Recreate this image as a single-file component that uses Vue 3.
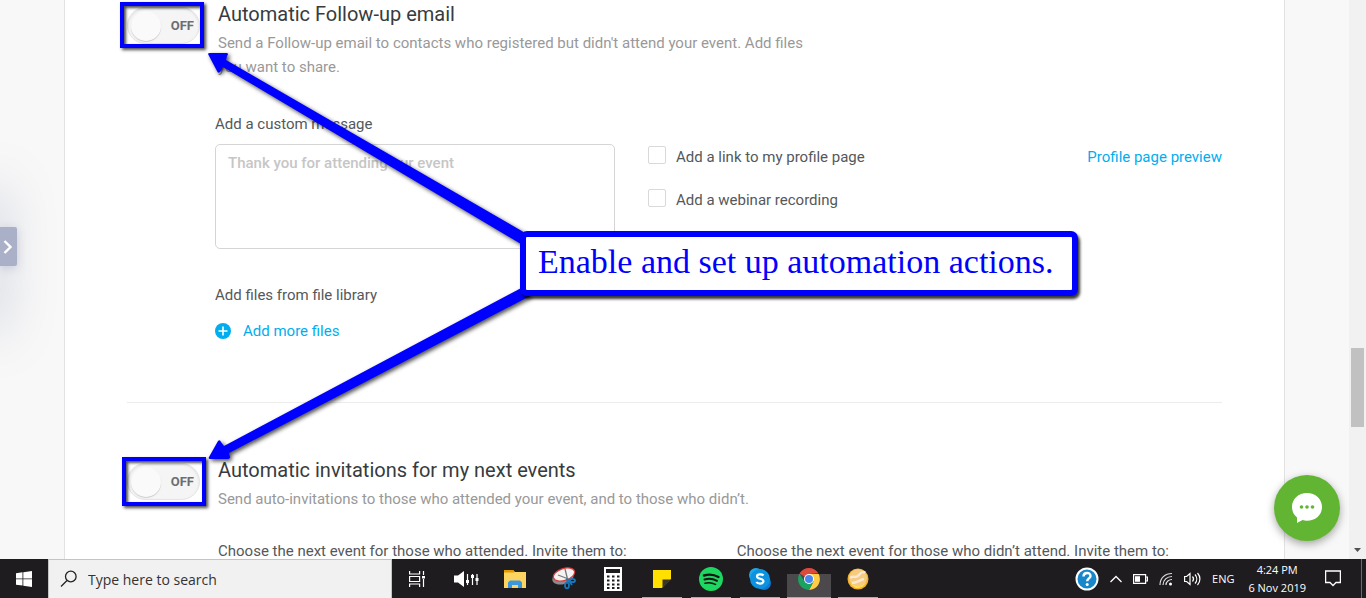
<template>
  <div class="desktop">
    <div class="browser">
      <main class="page">
        <div class="card">
          <section class="automation">
            <button
              type="button"
              class="toggle"
              role="switch"
              aria-label="Automatic Follow-up email"
              :aria-checked="followUp"
              @click="followUp = !followUp"
            >
              <span class="knob"></span>
              <span class="state">{{ followUp ? "ON" : "OFF" }}</span>
            </button>
            <div class="automation-body">
              <h2>Automatic Follow-up email</h2>
              <p class="description narrow">
                Send a Follow-up email to contacts who registered but didn't attend your event. Add files you want to share.
              </p>
            </div>
          </section>

          <div class="fields">
            <div class="message">
              <label for="message">Add a custom message</label>
              <textarea id="message" v-model="message" placeholder="Thank you for attending our event"></textarea>
            </div>
            <div class="options">
              <label v-for="item in options" :key="item.id" class="option">
                <input type="checkbox" v-model="item.checked" />
                {{ item.label }}
              </label>
            </div>
            <a class="preview" href="#">Profile page preview</a>
          </div>

          <div class="files">
            <p>Add files from file library</p>
            <a class="add-files" href="#">
              <svg width="16" height="16" viewBox="0 0 16 16">
                <circle cx="8" cy="8" r="8" fill="#00aeef" />
                <path d="M8 3.5v9M3.5 8h9" stroke="#fff" stroke-width="1.6" />
              </svg>
              Add more files
            </a>
          </div>

          <hr />

          <section class="automation">
            <button
              type="button"
              class="toggle"
              role="switch"
              aria-label="Automatic invitations for my next events"
              :aria-checked="invitations"
              @click="invitations = !invitations"
            >
              <span class="knob"></span>
              <span class="state">{{ invitations ? "ON" : "OFF" }}</span>
            </button>
            <div class="automation-body">
              <h2>Automatic invitations for my next events</h2>
              <p class="description">
                Send auto-invitations to those who attended your event, and to those who didn’t.
              </p>
              <div class="choices">
                <p>Choose the next event for those who attended. Invite them to:</p>
                <p>Choose the next event for those who didn’t attend. Invite them to:</p>
              </div>
            </div>
          </section>
        </div>
      </main>

      <div class="scrollbar">
        <div class="thumb"></div>
        <svg class="scroll-down" width="7" height="4" viewBox="0 0 7 4">
          <path d="M0 0h7L3.5 4z" fill="#505050" />
        </svg>
      </div>

      <div class="drawer-shadow"></div>
      <button type="button" class="drawer" aria-label="Open menu">
        <svg width="10" height="16" viewBox="0 0 10 16">
          <path d="M1.5 2l6 6-6 6" fill="none" stroke="#fff" stroke-width="2.4" />
        </svg>
      </button>

      <button type="button" class="chat" aria-label="Chat">
        <svg width="30" height="30" viewBox="0 0 30 30">
          <path d="M15 0C6.500 0 0 6 0 14c0 4.500 2 8 5 10.500V30l5.500-3c1.500.6 3 .8 4.500.8 8.500 0 15-5.800 15-13.800S23.500 0 15 0z" fill="#fff" />
          <g fill="#62b532">
            <circle cx="9.500" cy="14" r="1.800" />
            <circle cx="15" cy="14" r="1.800" />
            <circle cx="20.500" cy="14" r="1.800" />
          </g>
        </svg>
      </button>

      <!-- annotations -->
      <div class="frame frame-first"></div>
      <div class="frame frame-second"></div>
      <svg class="arrows" width="560" height="480" viewBox="0 0 560 480">
        <path d="M208 54q0-1 2-1h17q2 1 0 3l-1 4 301 174-6 10L223 67l-3 5q-2 2-3-1z" />
        <path d="M209 457l9-16q2-2 3 1l3 4 301-160 5 10-301 157 1 4q0 2-3 2h-17q-2 0-1-2z" />
      </svg>
      <div class="callout">Enable and set up automation actions.</div>
    </div>

    <footer class="taskbar">
      <button type="button" class="start" aria-label="Start">
        <svg width="16" height="16" viewBox="0 0 16 16" fill="#fff">
          <path d="M0 2.200l6.500-.9v6.200H0zM7.300 1.200L16 0v7.500H7.300zM0 8.300h6.500v6.200L0 13.700zM7.300 8.300H16V16l-8.700-1.300z" />
        </svg>
      </button>
      <label class="search">
        <svg width="18" height="18" viewBox="0 0 18 18" fill="none" stroke="#222" stroke-width="1.300">
          <circle cx="10.800" cy="6.500" r="5.300" />
          <path d="M7 10.500L1 16.500" />
        </svg>
        <input type="text" placeholder="Type here to search" />
      </label>

      <nav class="apps">
        <button type="button" aria-label="Task view">
          <svg width="18" height="18" viewBox="0 0 18 18" fill="none" stroke="#fff" stroke-width="1.200">
            <path d="M1.600 1v3h10V1M1.600 17v-3h10v3M1.600 6.500h10v5h-10zM15.500 1v4M15.500 9v8" />
            <path d="M14 6h3v2.500h-3z" fill="#fff" stroke="none" />
          </svg>
        </button>
        <button type="button" aria-label="Sound mixer">
          <svg width="26" height="18" viewBox="0 0 26 18">
            <path d="M1 5.500h4L11 1v16l-6-4.500H1z" fill="#fff" />
            <path d="M14.500 4v11M19.500 4v11M24 4v11" stroke="#fff" stroke-width="1.200" />
            <path d="M13 10h3v3h-3zM18 5h3v3h-3zM22.500 8h3v3h-3z" fill="#fff" />
          </svg>
        </button>
        <button type="button" aria-label="File Explorer">
          <svg width="22" height="18" viewBox="0 0 22 18">
            <path d="M0 0h9l2 2h11v16H0z" fill="#fcd462" />
            <path d="M0 0h9l1.500 2.500H0z" fill="#e09b00" />
            <path d="M4 18v-5.500l2-2h10l2 2V18h-4v-3H8v3z" fill="#3a96dd" />
          </svg>
        </button>
        <button type="button" aria-label="Snipping Tool">
          <svg width="24" height="23" viewBox="0 0 24 23">
            <ellipse cx="11" cy="10.500" rx="11" ry="6.500" fill="#8b8b8f" transform="rotate(-18 11 10.500)" />
            <ellipse cx="12" cy="7.500" rx="11" ry="6" fill="#f3f3f3" stroke="#d93a3a" stroke-width="1.300" transform="rotate(-18 12 7.500)" />
            <path d="M13 2l3 12M6 8l13 5" stroke="#777" stroke-width="1.300" />
            <g fill="none" stroke="#1679bf" stroke-width="1.800">
              <ellipse cx="20.500" cy="13.500" rx="2.500" ry="1.700" />
              <ellipse cx="15" cy="18.500" rx="2" ry="2.800" />
              <path d="M14 12l4 2M16 12l-1 4M17 14l3 4" />
            </g>
          </svg>
        </button>
        <button type="button" aria-label="Calculator">
          <svg width="18" height="24" viewBox="0 0 18 24">
            <path d="M0 0h18v24H0z" fill="#fff" />
            <path d="M2 2h14v4H2z" fill="#1e1c1f" />
            <path d="M3 9.500h13M3 13.500h13M3 17.500h13M3 21h13" stroke="#1e1c1f" stroke-width="2" stroke-dasharray="2.500 2.500" />
          </svg>
        </button>
        <button type="button" class="running" aria-label="Sticky Notes">
          <svg width="18" height="18" viewBox="0 0 18 18">
            <path d="M0 0h18v9l-9 9H0z" fill="#ffe000" />
            <path d="M9.500 18V9.500H18z" fill="#3a3520" />
          </svg>
        </button>
        <button type="button" class="running" aria-label="Spotify">
          <svg width="24" height="24" viewBox="0 0 24 24">
            <circle cx="12" cy="12" r="12" fill="#1ed760" />
            <g fill="none" stroke="#191414" stroke-linecap="round">
              <path d="M5 8.500c5-1.500 10-1 14.500 1.500" stroke-width="2.400" />
              <path d="M5.500 12.500c4.500-1.300 8.500-.8 12.500 1.300" stroke-width="2" />
              <path d="M6 16.200c4-1 7.200-.5 10.500 1.200" stroke-width="1.600" />
            </g>
          </svg>
        </button>
        <button type="button" class="running" aria-label="Skype">
          <svg width="22" height="22" viewBox="0 0 22 22">
            <circle cx="7" cy="7" r="7" fill="#1fa9ea" />
            <circle cx="15" cy="15" r="7" fill="#0a78d4" />
            <circle cx="11" cy="11" r="10" fill="#0d92e0" />
            <path d="M14.500 7.500C13.500 6.200 8 5.600 8 8.500c0 3 6.500 1.600 6.500 4.800 0 3-5.800 2.800-7.200.7" fill="none" stroke="#fff" stroke-width="2.200" />
          </svg>
        </button>
        <button type="button" class="running active" aria-label="Chrome">
          <svg width="22" height="22" viewBox="0 0 22 22">
            <path d="M11 11L1.500 5.500A11 11 0 0 1 20.500 5.500L11 6z" fill="#dd4b3e" />
            <path d="M11 6h9.700A11 11 0 0 1 11 22l4.500-8.500z" fill="#ffcd46" />
            <path d="M1.500 5.500A11 11 0 0 0 11 22l4.500-8.500L11 11l-4.500 2.500z" fill="#1aa260" />
            <circle cx="11" cy="11" r="5" fill="#fff" />
            <circle cx="11" cy="11" r="4" fill="#4a87ee" />
          </svg>
        </button>
        <button type="button" class="running" aria-label="Tennis">
          <svg width="22" height="22" viewBox="0 0 22 22">
            <circle cx="11" cy="11" r="10.500" fill="#f0b030" />
            <circle cx="11" cy="10" r="9" fill="#f5cb80" />
            <path d="M3 10c4-3 6 1 9-3s5-3 6-2M5 15c5 0 7-3 12-4" fill="none" stroke="#fbe6cf" stroke-width="2.500" />
            <path d="M3 14c3 5 12 6 16 0-2 7-13 9-16 0z" fill="#ffdf4f" />
          </svg>
        </button>
      </nav>

      <div class="tray">
        <svg width="24" height="24" viewBox="0 0 24 24">
          <circle cx="12" cy="12" r="10.500" fill="#1687cb" stroke="#fff" stroke-width="2" />
          <path d="M8.500 9.500c0-4.600 7-4.600 7-.6 0 2.400-3.300 2.600-3.300 5.300" fill="none" stroke="#fff" stroke-width="2.400" />
          <circle cx="12.200" cy="17.500" r="1.500" fill="#fff" />
        </svg>
        <svg width="12" height="8" viewBox="0 0 12 8">
          <path d="M.5 7L6 1.500 11.500 7" fill="none" stroke="#fff" stroke-width="1.300" />
        </svg>
        <svg width="15" height="10" viewBox="0 0 15 10">
          <path d="M.6.600h12v8.800H.6zM12.600 3h1.800v4h-1.800" fill="none" stroke="#fff" stroke-width="1.200" />
          <path d="M2 2.200h5v5.600H2z" fill="#fff" />
        </svg>
        <svg width="14" height="14" viewBox="0 0 14 14" fill="none" stroke="#ddd" stroke-width="1.200">
          <path d="M1 13C1 6 6 1.500 13 1.500M4 13c0-5 4-8.500 9-8.500M7 13c0-3.500 3-5.500 6-5.500" />
          <circle cx="11.500" cy="12" r="1.500" fill="#fff" stroke="none" />
        </svg>
        <svg width="17" height="14" viewBox="0 0 17 14" fill="none" stroke="#fff" stroke-width="1.200">
          <path d="M.6 4.500h2L6 1.500v11L2.600 9.500h-2zM8.500 4.500c1.300 1.500 1.300 3.500 0 5M11 2.500c2.300 2.600 2.300 6.400 0 9M13.500 1c3.200 3.500 3.200 8.500 0 12" />
        </svg>
        <span class="lang">ENG</span>
        <div class="clock">
          <span>4:24 PM</span>
          <span>6 Nov 2019</span>
        </div>
        <svg width="16" height="17" viewBox="0 0 16 17">
          <path d="M.6 1h14.800v11.500H11l-3 3-3-3H.6z" fill="none" stroke="#fff" stroke-width="1.300" />
        </svg>
      </div>
    </footer>
  </div>
</template>

<script setup>
import { ref } from "vue";

const followUp = ref(false);
const invitations = ref(false);
const message = ref("");

const options = ref([
  { id: 1, label: "Add a link to my profile page", checked: false },
  { id: 2, label: "Add a webinar recording", checked: false },
]);
</script>

<style>
body {
  margin: 0;
}
</style>

<style scoped>
.desktop {
  display: flex;
  flex-direction: column;
  height: 100vh;
  overflow: hidden;
  font-family: Roboto, "Liberation Sans", sans-serif;
  font-size: 15px;
  line-height: 24px;
  color: #54585a;
}

.desktop * {
  box-sizing: border-box;
}

button {
  padding: 0;
  border: 0;
  background: none;
  font-family: inherit;
}

h2,
p {
  margin: 0;
}

a {
  color: #00aeef;
  text-decoration: none;
}

.browser {
  position: relative;
  display: flex;
  flex: 1;
  min-height: 0;
  overflow: hidden;
}

.page {
  flex: 1;
  padding: 0 64px;
  background: #f8f8f8;
  overflow: hidden;
}

.card {
  min-height: 100%;
  padding: 2px 62px 0;
  border: solid #e2e2e2;
  border-width: 0 1px;
  background: #fff;
}

.automation {
  display: flex;
  align-items: flex-start;
}

.automation-body {
  flex: 1;
  padding-left: 18px;
}

h2 {
  font-size: 20px;
  font-weight: 400;
  line-height: 24px;
  color: #373b3e;
}

.description {
  margin-top: 5px;
  color: #999;
}

.narrow {
  max-width: 605px;
}

/* on/off switch */
.toggle {
  display: flex;
  align-items: center;
  justify-content: space-between;
  width: 73px;
  height: 37px;
  margin-top: 5px;
  padding: 0 5px 0 3px;
  border: 1px solid #e4e4e4;
  border-radius: 19px;
  background: #f5f5f5;
  box-shadow: inset 0 1px 2px #ddd;
}

.knob {
  width: 30px;
  height: 30px;
  border-radius: 50%;
  background: #fafafa;
  box-shadow: 0 1px 1px #ccc;
}

.state {
  font-size: 13px;
  font-weight: 700;
  color: #6e6e6e;
}

.fields {
  display: flex;
  margin-top: 33px;
  padding-left: 88px;
}

.message {
  width: 400px;
}

.message label {
  display: block;
}

textarea {
  display: block;
  width: 100%;
  height: 105px;
  margin-top: 8px;
  padding: 6px 12px;
  border: 1px solid #d5d5d5;
  border-radius: 5px;
  font: inherit;
  color: inherit;
  resize: none;
}

textarea::placeholder {
  color: #c6c6c6;
  font-weight: 500;
}

.options {
  display: flex;
  flex: 1;
  flex-direction: column;
  gap: 19px;
  padding: 33px 0 0 33px;
}

.option {
  display: flex;
  gap: 10px;
}

.option input {
  appearance: none;
  width: 18px;
  height: 18px;
  margin: 1px 0 0;
  border: 1px solid #d9d9d9;
  border-radius: 2px;
  background: #fff;
}

.option input:checked {
  background: #00aeef;
}

.preview {
  padding-top: 33px;
}

.files {
  margin-top: 34px;
  padding-left: 88px;
}

.add-files {
  display: flex;
  align-items: center;
  gap: 12px;
  width: fit-content;
  margin-top: 12px;
}

hr {
  margin: 59px 0 55px;
  border: 0;
  border-top: 1px solid #ececec;
}

.choices {
  display: flex;
  gap: 110px;
  margin-top: 28px;
  white-space: nowrap;
}

.scrollbar {
  display: flex;
  flex-direction: column;
  align-items: center;
  justify-content: flex-end;
  width: 17px;
  padding-bottom: 7px;
  background: #f1f1f1;
}

.thumb {
  width: 13px;
  height: 79px;
  margin-bottom: 121px;
  background: #c1c1c1;
}

/* side drawer */
.drawer-shadow {
  position: absolute;
  top: 190px;
  left: -20px;
  width: 20px;
  height: 140px;
  border-radius: 10px;
  box-shadow: 0 0 50px 5px rgba(120, 130, 165, 0.3);
}

.drawer {
  position: absolute;
  top: 227px;
  left: 0;
  display: flex;
  align-items: center;
  justify-content: flex-end;
  width: 17px;
  height: 39px;
  padding-right: 4px;
  border-radius: 0 2px 2px 0;
  background: #a9b0c8;
  box-shadow: 0 2px 10px rgba(120, 130, 165, 0.3);
}

.chat {
  position: absolute;
  right: 26px;
  bottom: 18px;
  display: flex;
  align-items: center;
  justify-content: center;
  width: 66px;
  height: 66px;
  border-radius: 50%;
  background: #62b532;
  box-shadow: 0 3px 8px rgba(0, 0, 0, 0.35);
}

.frame {
  position: absolute;
  border: 4px solid #00f;
  box-shadow: 2px 2px 3px rgba(0, 0, 0, 0.7), inset 2px 2px 3px rgba(0, 0, 0, 0.7);
  pointer-events: none;
}

.frame-first {
  top: 2px;
  left: 120px;
  width: 84px;
  height: 46px;
}

.frame-second {
  top: 457px;
  left: 122px;
  width: 84px;
  height: 49px;
}

.arrows {
  position: absolute;
  top: 0;
  left: 0;
  fill: #00f;
  filter: drop-shadow(2px 2px 2px rgba(0, 0, 0, 0.7));
  pointer-events: none;
}

.callout {
  position: absolute;
  top: 231px;
  left: 520px;
  padding: 5px 18px 8px 12px;
  border: 6px solid #00f;
  border-radius: 7px;
  background: #fff;
  box-shadow: 2px 3px 3px rgba(0, 0, 0, 0.8);
  font-family: "Liberation Serif", serif;
  font-size: 34px;
  line-height: 40px;
  color: #00f;
  white-space: nowrap;
}

.taskbar {
  display: flex;
  height: 39px;
  background: #1e1c1f;
  color: #fff;
  font-family: "Open Sans", "Noto Sans", sans-serif;
}

.start {
  width: 48px;
}

.start svg {
  display: block;
  margin: 0 auto;
}

.search {
  display: flex;
  align-items: center;
  gap: 10px;
  width: 344px;
  padding-left: 11px;
  border: 1px solid #c4c4c4;
  border-bottom: 0;
  background: #f1f1f1;
}

.search input {
  flex: 1;
  min-width: 0;
  padding: 0;
  border: 0;
  background: none;
  font-family: inherit;
  font-size: 14px;
  outline: none;
}

.search input::placeholder {
  color: #333;
}

.apps {
  display: flex;
  flex: 1;
}

.apps button {
  display: flex;
  align-items: center;
  justify-content: center;
  width: 49px;
}

.apps .running {
  background: linear-gradient(#76b9ed, #76b9ed) center bottom / 40px 1px no-repeat;
}

.apps .active {
  background: linear-gradient(#76b9ed, #76b9ed) center bottom / 44px 1px no-repeat,
    linear-gradient(#4b494c, #4b494c) center bottom / 44px 24px no-repeat;
}

.tray {
  display: flex;
  align-items: center;
  gap: 11px;
  margin-right: 4px;
  padding-right: 20px;
  border-right: 1px solid #6a6a6a;
  font-size: 11px;
}

.clock {
  display: flex;
  flex-direction: column;
  align-items: center;
  margin: 0 8px 0 3px;
  line-height: 18px;
}

.lang {
  line-height: 18px;
}
</style>
